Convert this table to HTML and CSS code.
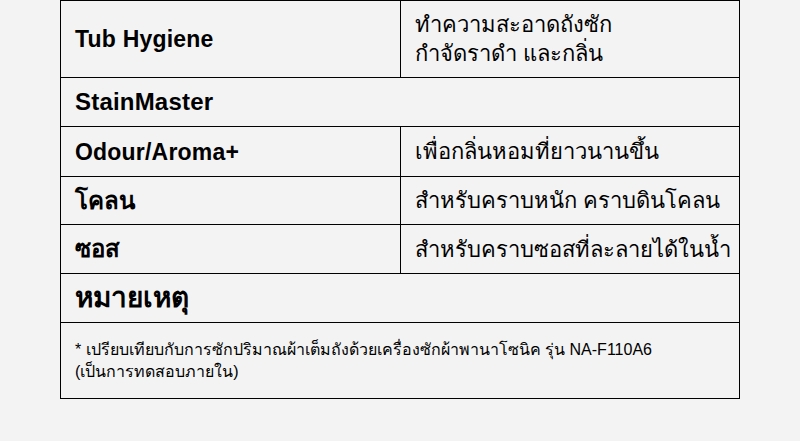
FILE: index.html
```html
<!DOCTYPE html>
<html lang="th">
<head>
<meta charset="utf-8">
<link rel="stylesheet" href="styles.css">
</head>
<body>
<div class="page">
  <table class="spec">
    <tr class="r1">
      <th class="name en">Tub Hygiene</th>
      <td class="desc">ทำความสะอาดถังซัก<br>กำจัดราดำ และกลิ่น</td>
    </tr>
    <tr class="r2">
      <th class="name en big" colspan="2">StainMaster</th>
    </tr>
    <tr class="r3">
      <th class="name en">Odour/Aroma+</th>
      <td class="desc">เพื่อกลิ่นหอมที่ยาวนานขึ้น</td>
    </tr>
    <tr class="r4">
      <th class="name th">โคลน</th>
      <td class="desc">สำหรับคราบหนัก คราบดินโคลน</td>
    </tr>
    <tr class="r5">
      <th class="name th">ซอส</th>
      <td class="desc">สำหรับคราบซอสที่ละลายได้ในน้ำ</td>
    </tr>
    <tr class="r6">
      <th class="name th big" colspan="2">หมายเหตุ</th>
    </tr>
    <tr class="r7">
      <td class="note" colspan="2">* เปรียบเทียบกับการซักปริมาณผ้าเต็มถังด้วยเครื่องซักผ้าพานาโซนิค รุ่น NA-F110A6<br>(เป็นการทดสอบภายใน)</td>
    </tr>
  </table>
</div>
</body>
</html>
```

FILE: styles.css
```css
html, body {
  margin: 0;
  padding: 0;
  background: #f3f3f3;
}
body {
  font-family: "Liberation Sans", "Noto Sans", sans-serif;
  color: #000;
}
.page {
  padding: 0 60px;
}
.spec {
  width: 680px;
  border-collapse: collapse;
  table-layout: fixed;
}
.spec th, .spec td {
  border: 1px solid #000;
  padding: 0 14px;
  text-align: left;
  vertical-align: middle;
}
.spec th.name {
  width: 311px;
  font-weight: bold;
  line-height: 30px;
  white-space: nowrap;
}
.en {
  font-size: 23px;
  letter-spacing: 0.2px;
}
.en.big {
  font-size: 24px;
}
.th {
  font-size: 24px;
}
.th.big {
  font-size: 28px;
}
.desc {
  font-size: 22px;
  line-height: 29px;
  white-space: nowrap;
}
.r1 { height: 77px; }
.r2 { height: 49px; }
.r3 { height: 50px; }
.r4 { height: 48px; }
.r5 { height: 49px; }
.r6 { height: 49px; }
.r7 { height: 76px; }
.note {
  font-size: 16px;
  line-height: 22px;
  padding-top: 2px;
}
```
